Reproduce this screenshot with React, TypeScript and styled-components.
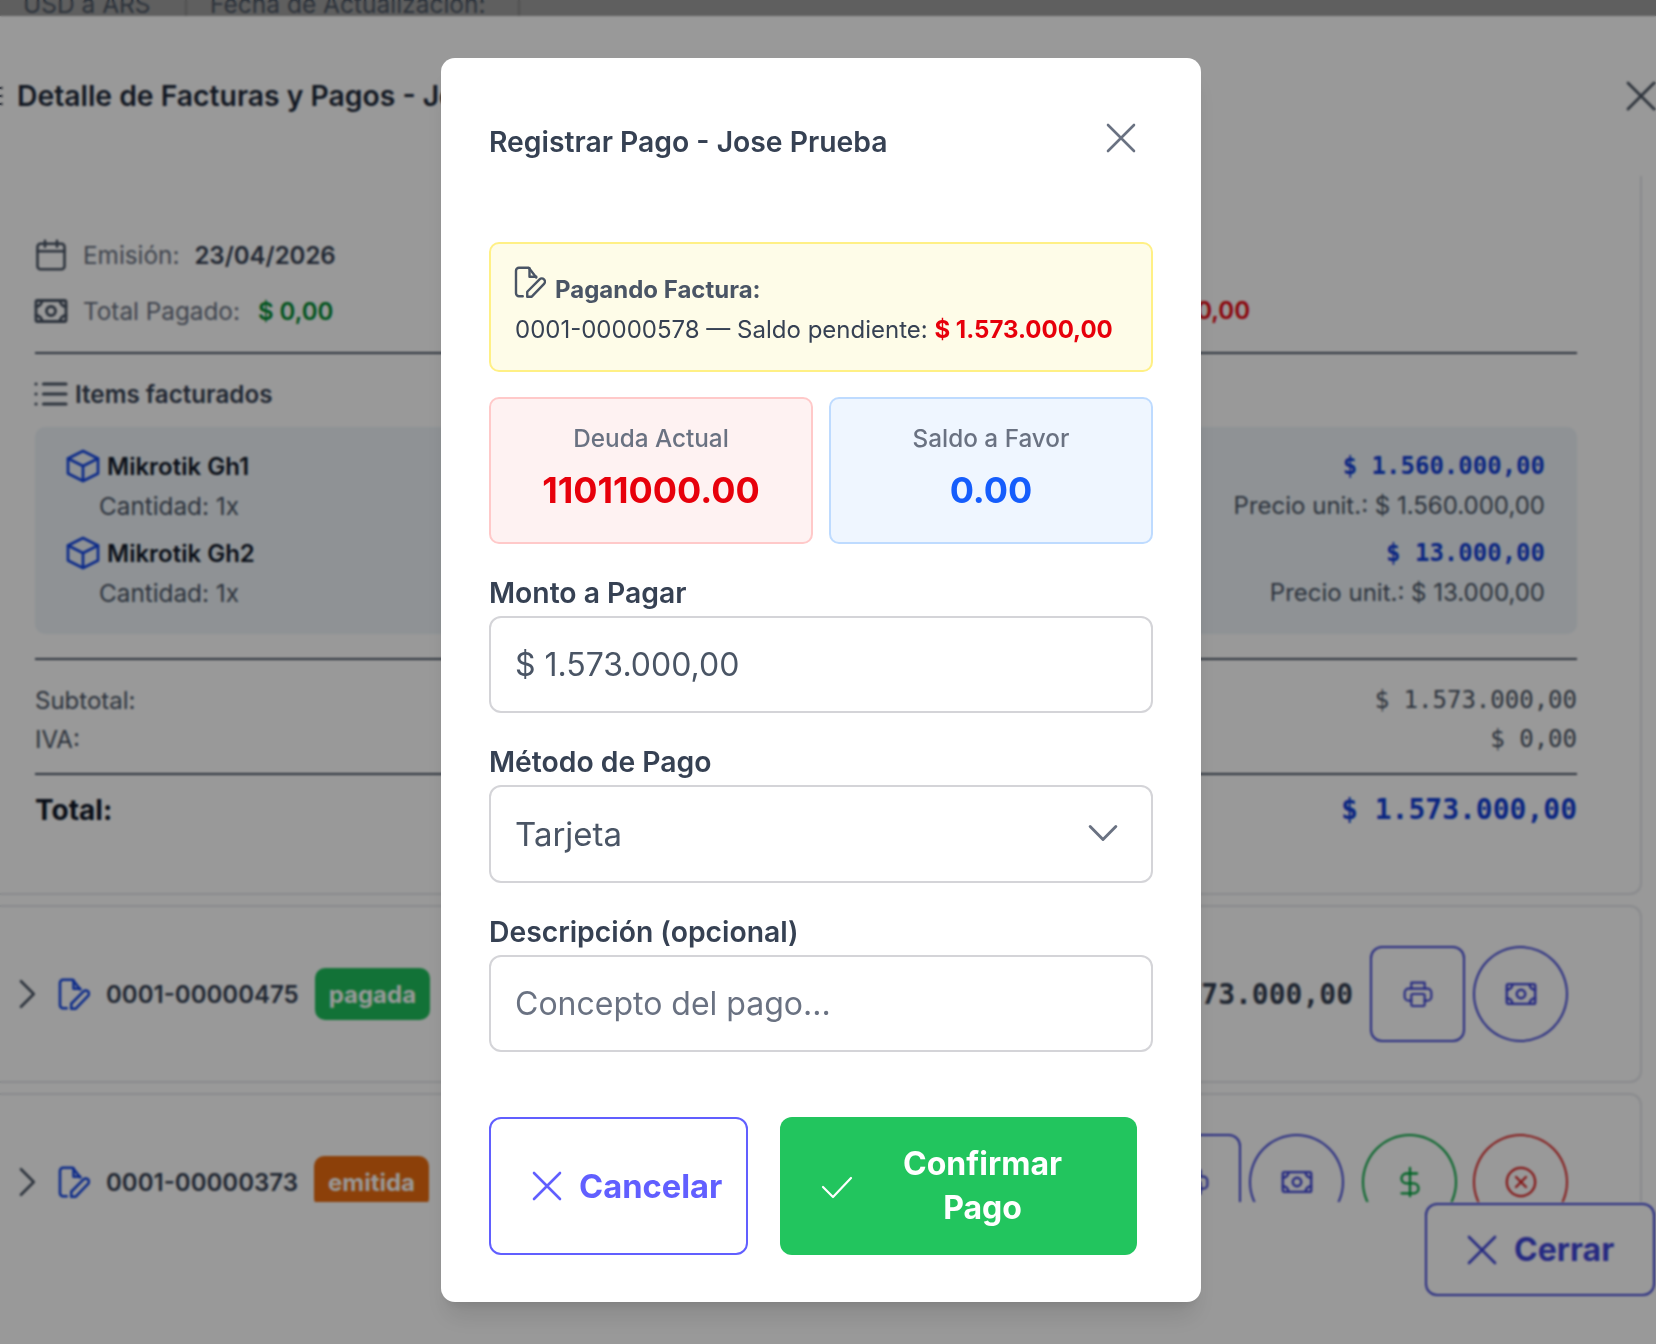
import React from "react";
import styled, { createGlobalStyle } from "styled-components";

const GlobalStyle = createGlobalStyle`
  * { box-sizing: border-box; }
  html, body { margin: 0; padding: 0; background: #fff; }
  body { font-family: Inter, "Noto Sans", sans-serif; }
`;

type IconProps = { size: number; sw?: number; className?: string; children?: React.ReactNode };

function Icon({ size, sw = 1.5, className, children }: IconProps) {
  return (
    <svg
      className={className}
      width={size}
      height={size}
      viewBox="0 0 24 24"
      fill="none"
      stroke="currentColor"
      strokeWidth={sw}
      strokeLinecap="round"
      strokeLinejoin="round"
      style={{ flexShrink: 0 }}
    >
      {children}
    </svg>
  );
}

const XIcon = (p: IconProps) => (
  <Icon {...p}>
    <path d="M6 18 18 6M6 6l12 12" />
  </Icon>
);
const CheckIcon = (p: IconProps) => (
  <Icon {...p}>
    <path d="M5 12.5l5 5 9-9.5" />
  </Icon>
);
const ChevronRight = (p: IconProps) => (
  <Icon {...p}>
    <path d="M8 3.5l8.5 8.5L8 20.5" />
  </Icon>
);
const ChevronDown = (p: IconProps) => (
  <Icon {...p}>
    <path d="M5 8.5l7 7 7-7" />
  </Icon>
);
const DocPen = (p: IconProps) => (
  <Icon {...p}>
    <path d="M8.5 21.5H6a2 2 0 0 1-2-2v-15a2 2 0 0 1 2-2h6.5l5 6.5" />
    <path d="M13 2.8V8.5h4.5" />
    <path d="M11.5 21.8v-3.3l8.2-8.2a2 2 0 0 1 3 2.9l-8.2 8.6z" />
  </Icon>
);
const Banknote = (p: IconProps) => (
  <Icon {...p}>
    <rect x="2" y="5" width="20" height="14" rx="1" />
    <circle cx="12" cy="12" r="3" />
    <path d="M2 9a4 4 0 0 0 4-4M22 9a4 4 0 0 1-4-4M2 15a4 4 0 0 1 4 4M22 15a4 4 0 0 0-4 4" />
  </Icon>
);
const Calendar = (p: IconProps) => (
  <Icon {...p}>
    <rect x="3" y="4.5" width="18" height="17" rx="2" />
    <path d="M8 2.5v4M16 2.5v4M3 9.5h18" />
  </Icon>
);
const ListIcon = (p: IconProps) => (
  <Icon {...p}>
    <path d="M7.5 6H21M7.5 12H21M7.5 18H21M3 6h.01M3 12h.01M3 18h.01" />
  </Icon>
);
const Cube = (p: IconProps) => (
  <Icon {...p}>
    <path d="M12 3l9 4.500v9L12 21l-9-4.500v-9z" />
    <path d="M3 7.500l9 4.500 9-4.500M12 12v9" />
  </Icon>
);
const Printer = (p: IconProps) => (
  <Icon {...p}>
    <path d="M7 8V3.500h10V8" />
    <path d="M7 17H5a3 3 0 0 1-3-3v-3a3 3 0 0 1 3-3h14a3 3 0 0 1 3 3v3a3 3 0 0 1-3 3h-2" />
    <rect x="7" y="12" width="10" height="9" rx="1" />
  </Icon>
);
const Dollar = (p: IconProps) => (
  <Icon {...p}>
    <path d="M12 2v20M17 6H9.500a3.500 3.500 0 0 0 0 7h5a3.500 3.500 0 0 1 0 7H6" />
  </Icon>
);
const CircleX = (p: IconProps) => (
  <Icon {...p}>
    <circle cx="12" cy="12" r="10" />
    <path d="M15.500 8.500l-7 7M8.500 8.500l7 7" />
  </Icon>
);

const invoiceItems = [
  { name: "Mikrotik Gh1", total: "$ 1.560.000,00", unit: "Precio unit.: $ 1.560.000,00" },
  { name: "Mikrotik Gh2", total: "$ 13.000,00", unit: "Precio unit.: $ 13.000,00" },
];

function InvoiceDetail() {
  return (
    <DetailCard>
      <InfoGrid>
        <InfoRow>
          <IconSlot>
            <Calendar size={36} sw={1.7} />
          </IconSlot>
          <InfoLabel $gap={15}>Emisión:</InfoLabel>
          <InfoValue>23/04/2026</InfoValue>
        </InfoRow>
        <span />
        <InfoRow>
          <IconSlot>
            <Banknote size={36} sw={1.9} />
          </IconSlot>
          <InfoLabel $gap={18}>Total Pagado:</InfoLabel>
          <InfoValue $color="#008a30">$ 0,00</InfoValue>
        </InfoRow>
        <PendingAmount>$ 1.573.000,00</PendingAmount>
      </InfoGrid>
      <Divider $top={21} />
      <ItemsTitle>
        <IconSlot>
          <ListIcon size={40} sw={1.9} />
        </IconSlot>
        Items facturados
      </ItemsTitle>
      <ItemsBox>
        {invoiceItems.map((item) => (
          <Item key={item.name}>
            <div>
              <ItemName>
                <CubeIcon size={40} sw={1.6} />
                {item.name}
              </ItemName>
              <ItemQty>Cantidad: 1x</ItemQty>
            </div>
            <ItemPrices>
              <ItemTotal>{item.total}</ItemTotal>
              <ItemUnit>{item.unit}</ItemUnit>
            </ItemPrices>
          </Item>
        ))}
      </ItemsBox>
      <Divider $top={24} />
      <SummaryRows>
        <SummaryRow>
          <span>Subtotal:</span>
          <Mono>$ 1.573.000,00</Mono>
        </SummaryRow>
        <SummaryRow>
          <span>IVA:</span>
          <Mono>$ 0,00</Mono>
        </SummaryRow>
      </SummaryRows>
      <Divider $top={14} />
      <TotalRow>
        <span>Total:</span>
        <TotalValue>$ 1.573.000,00</TotalValue>
      </TotalRow>
    </DetailCard>
  );
}

function InvoiceRow({
  number,
  status,
  tone,
  extraActions,
}: {
  number: string;
  status: string;
  tone: string;
  extraActions?: boolean;
}) {
  return (
    <RowCard>
      <RowLeft>
        <RowChevron size={36} sw={1.75} />
        <RowDoc size={36} sw={1.7} />
        <RowNumber>{number}</RowNumber>
        <Badge $bg={tone}>{status}</Badge>
      </RowLeft>
      <RowRight>
        <RowAmount>$ 1.573.000,00</RowAmount>
        <SquareAction>
          <Printer size={32} sw={1.6} />
        </SquareAction>
        <RoundAction $color="#3f46d8">
          <Banknote size={34} sw={1.7} />
        </RoundAction>
        {extraActions && (
          <>
            <RoundAction $color="#00a63e" $space={10}>
              <Dollar size={34} sw={1.6} />
            </RoundAction>
            <RoundAction $color="#dc2626" $space={8}>
              <CircleX size={34} sw={1.6} />
            </RoundAction>
          </>
        )}
      </RowRight>
    </RowCard>
  );
}

function PaymentModal() {
  return (
    <Overlay>
      <Modal>
        <ModalHeader>
          <ModalTitle>Registrar Pago - Jose Prueba</ModalTitle>
          <ModalClose size={52} sw={1.2} />
        </ModalHeader>

        <Notice>
          <NoticeHead>
            <NoticeIcon size={36} sw={1.6} />
            <strong>Pagando Factura:</strong>
          </NoticeHead>
          <NoticeBody>
            0001-00000578 — Saldo pendiente: <strong>$ 1.573.000,00</strong>
          </NoticeBody>
        </Notice>

        <Stats>
          <Stat $bg="#fef2f2" $border="#ffc9c9">
            <StatLabel>Deuda Actual</StatLabel>
            <StatValue $color="#e7000b">11011000.00</StatValue>
          </Stat>
          <Stat $bg="#eff6ff" $border="#bedbff">
            <StatLabel>Saldo a Favor</StatLabel>
            <StatValue $color="#155dfc">0.00</StatValue>
          </Stat>
        </Stats>

        <Field>
          <FieldLabel>Monto a Pagar</FieldLabel>
          <TextInput defaultValue="$ 1.573.000,00" />
        </Field>
        <Field>
          <FieldLabel>Método de Pago</FieldLabel>
          <SelectWrap>
            <MethodSelect defaultValue="Tarjeta">
              <option>Efectivo</option>
              <option>Tarjeta</option>
              <option>Transferencia</option>
            </MethodSelect>
            <SelectChevron size={44} sw={1.6} />
          </SelectWrap>
        </Field>
        <Field>
          <FieldLabel>Descripción (opcional)</FieldLabel>
          <TextInput placeholder="Concepto del pago..." />
        </Field>

        <Actions>
          <CancelButton>
            <XIcon size={52} sw={1.2} />
            Cancelar
          </CancelButton>
          <ConfirmButton>
            <CheckIcon size={48} sw={1.1} />
            <ConfirmText>Confirmar Pago</ConfirmText>
          </ConfirmButton>
        </Actions>
      </Modal>
    </Overlay>
  );
}

export default function App() {
  return (
    <Page>
      <GlobalStyle />
      <TopStrip>
        <StripCell $width={185}>USD a ARS</StripCell>
        <StripCell $width={335} $bordered>
          Fecha de Actualización:
        </StripCell>
      </TopStrip>
      <Dialog>
        <DialogHeader>
          <TitleGroup>
            <EdgeIcon size={32} />
            <DialogTitle>Detalle de Facturas y Pagos - Jose Prueba</DialogTitle>
          </TitleGroup>
          <DialogClose size={52} sw={1.3} />
        </DialogHeader>
        <ScrollArea>
          <InvoiceDetail />
          <InvoiceRow number="0001-00000475" status="pagada" tone="#1fbf5c" />
          <InvoiceRow number="0001-00000373" status="emitida" tone="#ea6c10" extraActions />
        </ScrollArea>
        <DialogFooter>
          <CloseButton>
            <XIcon size={52} sw={1.2} />
            Cerrar
          </CloseButton>
        </DialogFooter>
      </Dialog>
      <PaymentModal />
    </Page>
  );
}

const Page = styled.div`
  position: relative;
  width: 1656px;
  height: 1344px;
  overflow: hidden;
  display: flex;
  flex-direction: column;
  background: #fff;
`;

const TopStrip = styled.div`
  height: 16px;
  flex-shrink: 0;
  display: flex;
  background: #9e9e9e;
  overflow: hidden;
`;

const StripCell = styled.div<{ $width: number; $bordered?: boolean }>`
  width: ${(p) => p.$width}px;
  height: 16px;
  padding-left: 23px;
  line-height: 8px;
  font-size: 24.5px;
  color: #4b5563;
  border-left: ${(p) => (p.$bordered ? "2px solid #8a8a8a" : "0")};
  border-right: ${(p) => (p.$bordered ? "2px solid #8a8a8a" : "0")};
  white-space: nowrap;
`;

const Dialog = styled.div`
  flex: 1;
  display: flex;
  flex-direction: column;
  min-height: 0;
`;

const DialogHeader = styled.div`
  height: 160px;
  flex-shrink: 0;
  display: flex;
  justify-content: space-between;
  padding-top: 58px;
`;

const TitleGroup = styled.div`
  display: flex;
  height: 44px;
  align-items: center;
  gap: 11px;
  margin-left: -26px;
  color: #374151;
`;

const EdgeIcon = styled(ListIcon)``;

const DialogTitle = styled.h2`
  margin: 0;
  font-size: 28.3px;
  font-weight: 600;
  line-height: 44px;
  color: #1e2939;
  white-space: nowrap;
`;

const DialogClose = styled(XIcon)`
  margin: -4px -11px 0 0;
  color: #4b5563;
`;

const ScrollArea = styled.div`
  height: 1026px;
  flex-shrink: 0;
  margin-left: -24px;
  width: 1666px;
  overflow: hidden;
  display: flex;
  flex-direction: column;
  gap: 10px;
`;

const DetailCard = styled.section`
  flex-shrink: 0;
  height: 719px;
  padding: 59px 63px 0 57px;
  border: 2px solid #e5e7eb;
  border-top: 0;
  border-radius: 0 0 12px 12px;
`;

const InfoGrid = styled.div`
  display: grid;
  grid-template-columns: 773px 442px;
  row-gap: 16px;
`;

const InfoRow = styled.div`
  display: flex;
  align-items: center;
  height: 40px;
  font-size: 24px;
`;

const IconSlot = styled.span`
  width: 32px;
  flex-shrink: 0;
  display: flex;
  justify-content: center;
  color: #4a5565;
`;

const InfoLabel = styled.span<{ $gap: number }>`
  margin: 0 ${(p) => p.$gap}px 0 16px;
  font-size: 24.3px;
  color: #6a7282;
`;

const InfoValue = styled.span<{ $color?: string }>`
  font-weight: 600;
  color: ${(p) => p.$color ?? "#364153"};
`;

const PendingAmount = styled.span`
  font-size: 24px;
  line-height: 40px;
  font-weight: 600;
  text-align: right;
  color: #e7000b;
`;

const Divider = styled.hr<{ $top: number }>`
  height: 2px;
  margin: ${(p) => p.$top}px 0 0;
  border: 0;
  background: #4a5565;
`;

const ItemsTitle = styled.h3`
  display: flex;
  align-items: center;
  gap: 8px;
  height: 40px;
  margin: 20px 0 13px;
  font-size: 24.2px;
  font-weight: 600;
  color: #364153;
`;

const ItemsBox = styled.div`
  height: 207px;
  padding: 19px 32px 0 28px;
  border-radius: 10px;
  background: #eef4f9;
  display: flex;
  flex-direction: column;
  gap: 7px;
`;

const Item = styled.div`
  display: flex;
  justify-content: space-between;
`;

const ItemName = styled.div`
  display: flex;
  align-items: center;
  gap: 4px;
  height: 40px;
  font-size: 24px;
  font-weight: 600;
  color: #101828;
`;

const CubeIcon = styled(Cube)`
  color: #1447e6;
`;

const ItemQty = styled.div`
  height: 40px;
  margin-left: 36px;
  font-size: 24.3px;
  line-height: 40px;
  color: #4a5565;
`;

const ItemPrices = styled.div`
  text-align: right;
`;

const ItemTotal = styled.div`
  font-family: "DejaVu Sans Mono", monospace;
  font-size: 24px;
  font-weight: 700;
  line-height: 40px;
  color: #1240d8;
`;

const ItemUnit = styled.div`
  font-size: 24px;
  line-height: 40px;
  color: #4a5565;
`;

const SummaryRows = styled.div`
  margin-top: 21px;
`;

const SummaryRow = styled.div`
  display: flex;
  justify-content: space-between;
  height: 39px;
  font-size: 24px;
  line-height: 39px;
  color: #4a5565;
`;

const Mono = styled.span`
  font-family: "DejaVu Sans Mono", monospace;
`;

const TotalRow = styled.div`
  display: flex;
  justify-content: space-between;
  height: 42px;
  margin-top: 14px;
  font-size: 28px;
  font-weight: 700;
  line-height: 42px;
  color: #101828;
`;

const TotalValue = styled(Mono)`
  color: #1240d8;
`;

const RowCard = styled.article`
  flex-shrink: 0;
  height: 178px;
  padding: 0 72px 0 31px;
  display: flex;
  align-items: center;
  justify-content: space-between;
  border: 2px solid #e5e7eb;
  border-radius: 12px;
`;

const RowLeft = styled.div`
  display: flex;
  align-items: center;
  gap: 16px;
`;

const RowChevron = styled(ChevronRight)`
  color: #4a5565;
`;

const RowDoc = styled(DocPen)`
  margin-left: -7px;
  color: #1447e6;
`;

const RowNumber = styled.span`
  font-size: 24px;
  font-weight: 600;
  color: #364153;
`;

const Badge = styled.span<{ $bg: string }>`
  padding: 0 14px;
  height: 52px;
  display: flex;
  align-items: center;
  border-radius: 10px;
  font-size: 24px;
  font-weight: 700;
  color: #fff;
  background: ${(p) => p.$bg};
`;

const RowRight = styled.div`
  display: flex;
  align-items: center;
  gap: 8px;
`;

const RowAmount = styled(Mono)`
  margin-right: 9px;
  font-size: 28px;
  font-weight: 700;
  color: #364153;
`;

const SquareAction = styled.button`
  width: 95px;
  height: 96px;
  display: flex;
  align-items: center;
  justify-content: center;
  padding: 0;
  border: 2px solid #3f46d8;
  border-radius: 12px;
  background: transparent;
  color: #3f46d8;
`;

const RoundAction = styled.button<{ $color: string; $space?: number }>`
  width: 95px;
  height: 96px;
  display: flex;
  align-items: center;
  justify-content: center;
  padding: 0;
  margin-left: ${(p) => p.$space ?? 0}px;
  border: 2px solid ${(p) => p.$color};
  border-radius: 50%;
  background: transparent;
  color: ${(p) => p.$color};
`;

const DialogFooter = styled.div`
  flex: 1;
  display: flex;
  justify-content: flex-end;
  padding: 1px 1px 0 0;
`;

const CloseButton = styled.button`
  width: 230px;
  height: 93px;
  display: flex;
  align-items: center;
  gap: 6px;
  padding: 0 0 0 29px;
  border: 2px solid #3f46d8;
  border-radius: 12px;
  background: transparent;
  font-family: inherit;
  font-size: 32px;
  font-weight: 700;
  color: #3f46d8;
`;

const Overlay = styled.div`
  position: absolute;
  inset: 0;
  z-index: 10;
  display: flex;
  justify-content: center;
  align-items: flex-start;
  padding: 58px 14px 0 0;
  background: rgba(0, 0, 0, 0.4);
  backdrop-filter: blur(1px);
`;

const Modal = styled.div`
  width: 760px;
  height: 1244px;
  padding: 48px;
  border-radius: 14px;
  background: #fff;
  box-shadow: 0 20px 25px -5px rgba(0, 0, 0, 0.1), 0 8px 10px -6px rgba(0, 0, 0, 0.1);
`;

const ModalHeader = styled.div`
  height: 70px;
  margin-bottom: 66px;
  display: flex;
  align-items: center;
  justify-content: space-between;
`;

const ModalTitle = styled.h3`
  margin: 2px 0 0;
  font-size: 28.3px;
  font-weight: 600;
  color: #364153;
`;

const ModalClose = styled(XIcon)`
  margin: -6px 6px 0 0;
  color: #6a7282;
`;

const Notice = styled.div`
  height: 130px;
  padding: 22px 24px 0;
  border: 2px solid #fff085;
  border-radius: 10px;
  background: #fefce8;
  font-size: 24px;
  color: #364153;
`;

const NoticeHead = styled.div`
  height: 40px;
  display: flex;
  align-items: flex-start;
  gap: 9px;
  color: #4a5565;
  line-height: 48px;

  strong {
    font-weight: 700;
  }
`;

const NoticeIcon = styled(DocPen)`
  margin: -2px 0 0 -5px;
`;

const NoticeBody = styled.div`
  margin-top: 4px;
  line-height: 40px;
  white-space: nowrap;

  strong {
    font-weight: 700;
    color: #e7000b;
  }
`;

const Stats = styled.div`
  display: grid;
  grid-template-columns: 1fr 1fr;
  gap: 16px;
  margin: 25px 0 31px;
`;

const Stat = styled.div<{ $bg: string; $border: string }>`
  height: 147px;
  padding-top: 21px;
  text-align: center;
  border: 2px solid ${(p) => p.$border};
  border-radius: 10px;
  background: ${(p) => p.$bg};
`;

const StatLabel = styled.div`
  margin-bottom: 9px;
  font-size: 24.3px;
  font-weight: 500;
  line-height: 36px;
  color: #6a7282;
`;

const StatValue = styled.div<{ $color: string }>`
  font-size: 36px;
  font-weight: 700;
  line-height: 50px;
  color: ${(p) => p.$color};
`;

const Field = styled.div`
  margin-bottom: 31px;
`;

const FieldLabel = styled.label`
  display: block;
  height: 36px;
  margin-bottom: 5px;
  font-size: 28.3px;
  font-weight: 600;
  line-height: 36px;
  color: #364153;
`;

const TextInput = styled.input`
  display: block;
  width: 100%;
  height: 97px;
  padding: 0 24px;
  border: 2px solid #d4d4d8;
  border-radius: 12px;
  background: #fff;
  font-family: inherit;
  font-size: 32px;
  color: #4a5565;
  outline: none;

  &::placeholder {
    color: #6a7282;
    opacity: 1;
  }
`;

const SelectWrap = styled.div`
  position: relative;
`;

const MethodSelect = styled.select`
  display: block;
  width: 100%;
  height: 98px;
  padding: 0 24px;
  border: 2px solid #d4d4d8;
  border-radius: 12px;
  background: #fff;
  font-family: inherit;
  font-size: 33px;
  color: #4a5565;
  appearance: none;
  outline: none;
`;

const SelectChevron = styled(ChevronDown)`
  position: absolute;
  top: 26px;
  right: 28px;
  color: #6a7282;
  pointer-events: none;
`;

const Actions = styled.div`
  display: flex;
  gap: 32px;
  margin-top: 65px;
`;

const CancelButton = styled.button`
  width: 259px;
  height: 138px;
  display: flex;
  align-items: center;
  gap: 6px;
  padding: 0 0 0 30px;
  border: 2px solid #615fff;
  border-radius: 12px;
  background: #fff;
  font-family: inherit;
  font-size: 32.7px;
  font-weight: 700;
  color: #615fff;
`;

const ConfirmButton = styled.button`
  width: 357px;
  height: 138px;
  display: flex;
  align-items: center;
  padding: 0 33px;
  border: 0;
  border-radius: 12px;
  background: #22c55e;
  font-family: inherit;
  font-size: 32px;
  font-weight: 700;
  line-height: 44px;
  color: #fff;
`;

const ConfirmText = styled.span`
  flex: 1;
  padding: 0 30px;
  text-align: center;
`;
